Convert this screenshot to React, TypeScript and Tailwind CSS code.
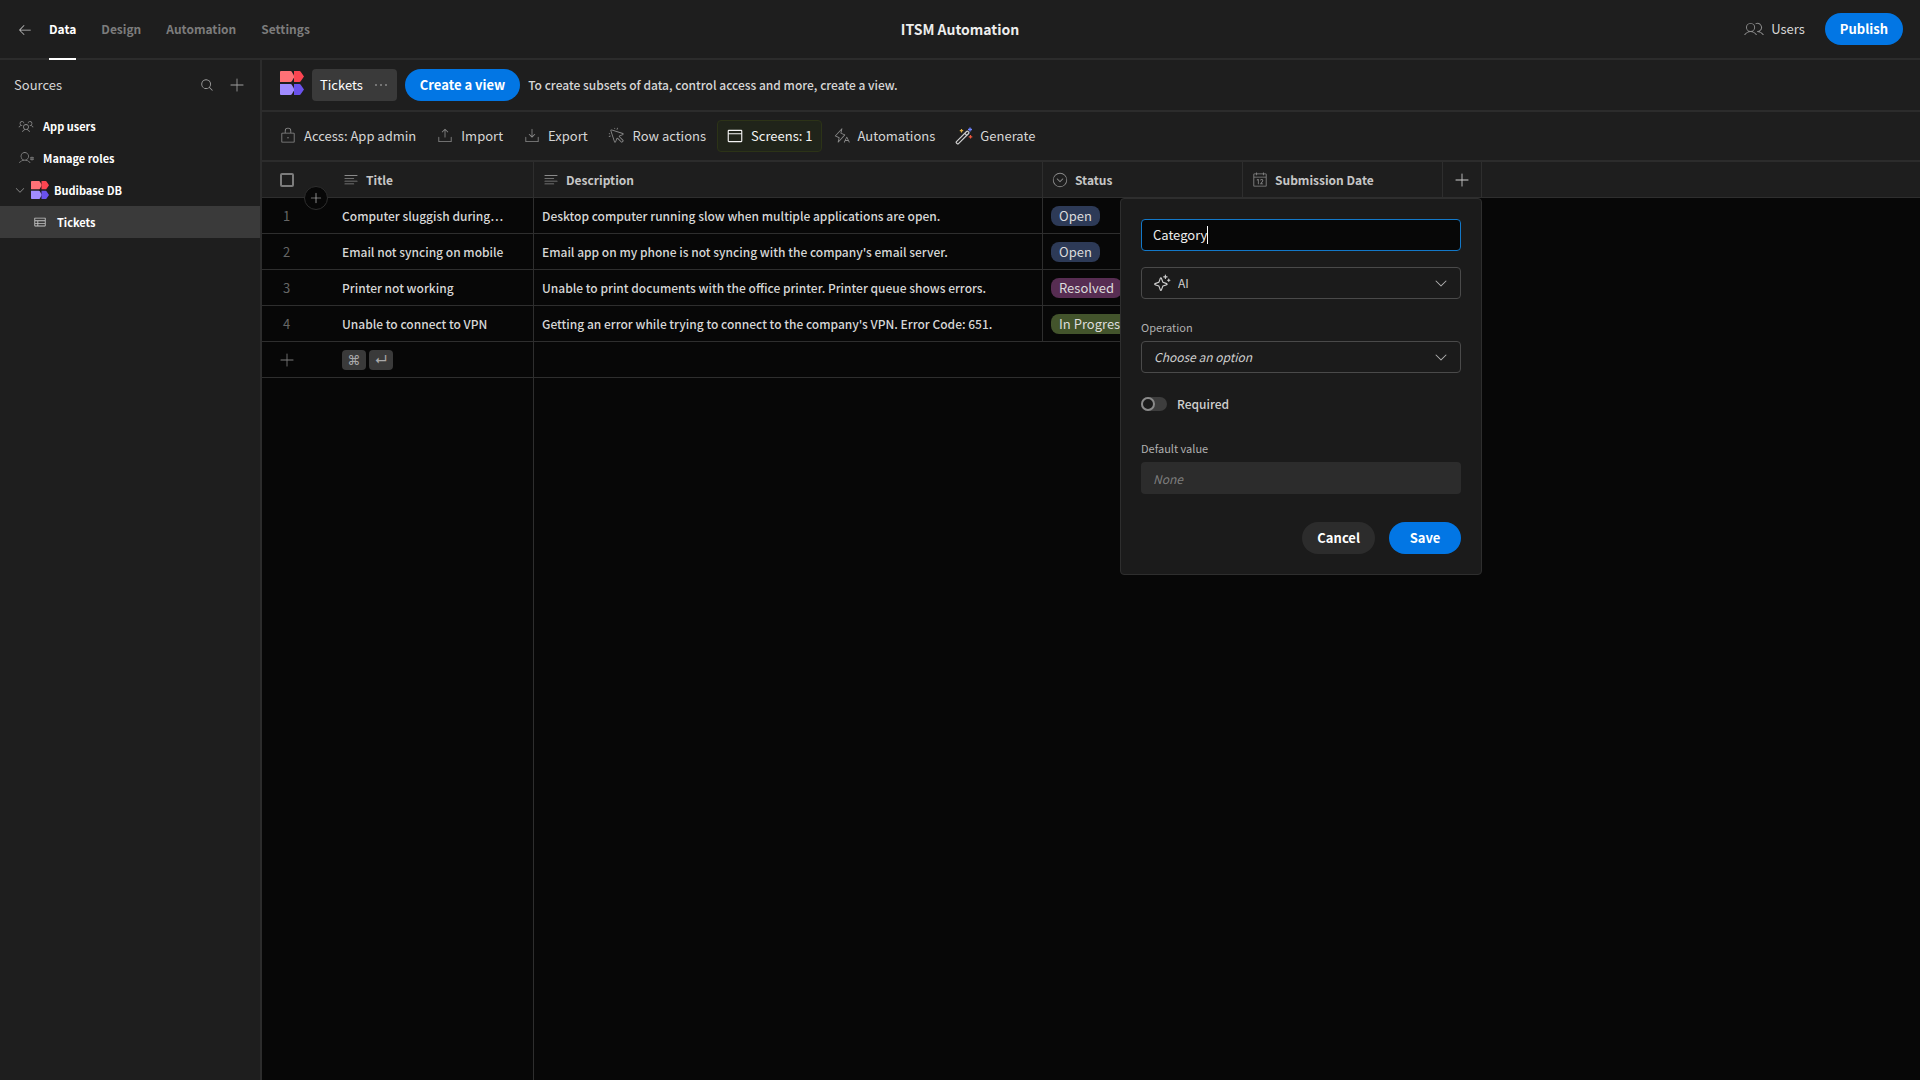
import { FC, ReactNode } from "react";
import { IconType } from "react-icons";
import {
  PiArrowLeftLight,
  PiBrowser,
  PiCalendarLight,
  PiCaretCircleDownLight,
  PiCaretDown,
  PiCursorClickLight,
  PiDownloadSimpleLight,
  PiLightningALight,
  PiLockLight,
  PiMagnifyingGlass,
  PiPlusLight,
  PiSparkle,
  PiTable,
  PiTextAlignLeftLight,
  PiUploadSimpleLight,
  PiUserGearLight,
  PiUsersLight,
  PiUsersThreeLight,
} from "react-icons/pi";

const tabs = ["Data", "Design", "Automation", "Settings"];

const actions: { label: string; icon: IconType }[] = [
  { label: "Access: App admin", icon: PiLockLight },
  { label: "Import", icon: PiUploadSimpleLight },
  { label: "Export", icon: PiDownloadSimpleLight },
  { label: "Row actions", icon: PiCursorClickLight },
];

const rows = [
  {
    title: "Computer sluggish during…",
    description: "Desktop computer running slow when multiple applications are open.",
    status: "Open",
    color: "bg-[#2d3a57]",
  },
  {
    title: "Email not syncing on mobile",
    description: "Email app on my phone is not syncing with the company's email server.",
    status: "Open",
    color: "bg-[#2d3a57]",
  },
  {
    title: "Printer not working",
    description: "Unable to print documents with the office printer. Printer queue shows errors.",
    status: "Resolved",
    color: "bg-[#572d52]",
  },
  {
    title: "Unable to connect to VPN",
    description: "Getting an error while trying to connect to the company's VPN. Error Code: 651.",
    status: "In Progress",
    color: "bg-[#43542c]",
  },
];

const Logo: FC<{ className: string }> = ({ className }) => (
  <svg viewBox="0 0 24 24" className={className} aria-hidden="true">
    <path d="M0 1a1 1 0 0 1 1-1h9.5q.8 0 1.300.7L14 4.600v1.800l-2.200 3.900q-.5.700-1.300.7H0z" fill="#ff7176" />
    <path d="M14 0h5.500q.8 0 1.200.7L24 5.500l-3.300 4.800q-.4.700-1.200.7H14z" fill="#fb4551" />
    <path d="M0 13h10.500q.8 0 1.300.7l2.200 3.900v1.800l-2.200 3.900q-.5.700-1.300.7H1a1 1 0 0 1-1-1z" fill="#a08bff" />
    <path d="M14 13h5.500q.8 0 1.200.7L24 18.500l-3.300 4.800q-.4.700-1.200.7H14z" fill="#6a52ec" />
  </svg>
);

const Wand: FC = () => (
  <svg viewBox="0 0 18 18" className="size-[18px] shrink-0" fill="none" aria-hidden="true">
    <path d="M1.500 14.600 11.600 4.500a1 1 0 0 1 1.400 0l.6.6a1 1 0 0 1 0 1.400L3.500 16.600a1 1 0 0 1-1.400 0l-.6-.6a1 1 0 0 1 0-1.400z" stroke="#d0d0d0" strokeWidth="1.200" />
    <path d="m9.800 6.300 2 2" stroke="#d0d0d0" strokeWidth="1.200" />
    <path d="M6.500 2v3.400M4.800 3.700h3.400" stroke="#e0b040" strokeWidth="1.200" />
    <path d="M15 .5v4M13 2.500h4" stroke="#6f85ff" strokeWidth="1.300" />
    <path d="M15.500 8v3.600M13.700 9.800h3.600" stroke="#f0553a" strokeWidth="1.200" />
  </svg>
);

const HeaderLabel: FC<{ icon: IconType; children: ReactNode }> = ({ icon: Icon, children }) => (
  <span className="flex items-center gap-[6px] font-bold text-[#c6c6c6]">
    <Icon className="size-[18px] shrink-0 text-[#8a8a8a]" />
    {children}
  </span>
);

const ColumnPopover: FC = () => (
  <form
    className="absolute -right-px top-full z-10 mt-px w-[362px] rounded border border-[#2e2e2e] bg-[#1b1b1b] p-5 text-left font-normal text-[#cfcfcf]"
    onSubmit={(e) => e.preventDefault()}
  >
    <div className="flex h-8 items-center rounded border border-[#1378c8] bg-[#070707] px-[11px] text-[13px]">
      <input aria-label="Column name" defaultValue="Category" className="field-sizing-content text-[#ededed] outline-none" />
      <span className="h-[18px] w-px bg-white" />
    </div>
    <div className="relative mt-4">
      <PiSparkle className="pointer-events-none absolute left-3 top-[7px] size-[18px]" />
      <select aria-label="Type" className="h-8 w-full appearance-none rounded border border-[#4a4a4a] pl-9 outline-none">
        <option>AI</option>
      </select>
      <PiCaretDown className="pointer-events-none absolute right-3 top-2 size-4 text-[#b0b0b0]" />
    </div>
    <label htmlFor="operation" className="mt-5 block text-[11px] leading-4 text-[#b0b0b0]">
      Operation
    </label>
    <div className="relative mt-[6px]">
      <select id="operation" className="h-8 w-full appearance-none rounded border border-[#4a4a4a] pl-3 italic outline-none">
        <option>Choose an option</option>
      </select>
      <PiCaretDown className="pointer-events-none absolute right-3 top-2 size-4 text-[#b0b0b0]" />
    </div>
    <label className="mt-[21px] flex items-center gap-[10px] font-medium">
      <input
        type="checkbox"
        role="switch"
        className="h-[14px] w-[26px] appearance-none rounded-full bg-[#3d3d3d] before:block before:size-[14px] before:rounded-full before:border-2 before:border-[#8a8a8a] before:bg-[#1b1b1b]"
      />
      Required
    </label>
    <label htmlFor="default-value" className="mt-[26px] block text-[11px] leading-4 text-[#b0b0b0]">
      Default value
    </label>
    <input
      id="default-value"
      placeholder="None"
      disabled
      className="mt-[6px] block h-8 w-full rounded bg-[#2c2c2c] px-3 italic placeholder:text-[#7e7e7e]"
    />
    <div className="mt-7 flex justify-end gap-[14px] text-[13px] font-bold text-white">
      <button type="button" className="h-8 rounded-full bg-[#2c2c2c] px-[15px]">
        Cancel
      </button>
      <button type="submit" className="h-8 w-[72px] rounded-full bg-[#0276e4]">
        Save
      </button>
    </div>
  </form>
);

const Sidebar: FC = () => (
  <aside className="w-[262px] shrink-0 border-r-2 border-[#2c2c2c] text-[11px] font-bold text-white">
    <div className="flex h-[50px] items-center gap-[14px] px-[14px] text-[#a0a0a0]">
      <h2 className="flex-1 text-[13px] font-normal text-[#d6d6d6]">Sources</h2>
      <button aria-label="Search sources">
        <PiMagnifyingGlass className="size-[14px]" />
      </button>
      <button aria-label="Add source">
        <PiPlusLight className="size-[18px]" />
      </button>
    </div>
    <nav className="flex flex-col">
      <a href="#" className="flex h-8 items-center gap-[9px] pl-[18px]">
        <PiUsersThreeLight className="size-4 text-[#8a8a8a]" />
        App users
      </a>
      <a href="#" className="flex h-8 items-center gap-[9px] pl-[18px]">
        <PiUserGearLight className="size-4 text-[#8a8a8a]" />
        Manage roles
      </a>
      <a href="#" className="flex h-8 items-center gap-[5px] pl-[14px]">
        <PiCaretDown className="size-3 text-[#8a8a8a]" />
        <Logo className="size-[18px]" />
        Budibase DB
      </a>
      <a href="#" className="flex h-8 items-center gap-[10px] bg-[#3a3a3a] pl-[33px]">
        <PiTable className="size-[14px] text-[#c6c6c6]" />
        Tickets
      </a>
    </nav>
  </aside>
);

const DataTable: FC = () => (
  <table className="w-full table-fixed border-separate border-spacing-0 text-left text-xs leading-5 font-medium">
    <colgroup>
      <col className="w-[72px]" />
      <col className="w-[200px]" />
      <col className="w-[509px]" />
      <col className="w-[200px]" />
      <col className="w-[200px]" />
      <col className="w-[39px]" />
      <col />
    </colgroup>
    <thead>
      <tr className="h-9 bg-[#1e1e1e] *:border-b *:border-[#2e2e2e]">
        <th className="relative pl-[18px]">
          <input type="checkbox" aria-label="Select all rows" className="block size-[14px] appearance-none rounded-xs border-2 border-[#7c7c7c]" />
          <button
            aria-label="Insert row"
            className="absolute -bottom-[13px] right-[6px] flex size-6 items-center justify-center rounded-full border border-[#2e2e2e] bg-[#070707] text-[#cfcfcf]"
          >
            <PiPlusLight className="size-[14px]" />
          </button>
        </th>
        <th className="border-r pl-2">
          <HeaderLabel icon={PiTextAlignLeftLight}>Title</HeaderLabel>
        </th>
        <th className="border-r pl-2">
          <HeaderLabel icon={PiTextAlignLeftLight}>Description</HeaderLabel>
        </th>
        <th className="border-r pl-2">
          <HeaderLabel icon={PiCaretCircleDownLight}>Status</HeaderLabel>
        </th>
        <th className="border-r pl-2">
          <HeaderLabel icon={PiCalendarLight}>Submission Date</HeaderLabel>
        </th>
        <th className="relative border-r">
          <button aria-label="Add column" className="mx-auto block text-[#cfcfcf]">
            <PiPlusLight className="size-[18px]" />
          </button>
          <ColumnPopover />
        </th>
        <th />
      </tr>
    </thead>
    <tbody>
      {rows.map((row, index) => (
        <tr key={index} className="h-9 *:border-b *:border-[#2e2e2e]">
          <td className="pl-[21px] text-[13px] font-normal text-[#666666]">{index + 1}</td>
          <td className="truncate border-r pl-2">{row.title}</td>
          <td className="truncate border-r pl-2">{row.description}</td>
          <td className="border-r pl-2">
            <span className={`inline-block h-5 rounded-lg px-2 align-middle text-[13px] leading-5 font-normal text-[#dcdcdc] ${row.color}`}>
              {row.status}
            </span>
          </td>
          <td className="border-r" />
          <td />
        </tr>
      ))}
      <tr className="h-9 *:border-b *:border-[#2e2e2e]">
        <td className="pl-4">
          <button aria-label="Add row" className="block text-[#7c7c7c]">
            <PiPlusLight className="size-[18px]" />
          </button>
        </td>
        <td className="border-r pl-2">
          <span className="flex gap-[3px] text-[13px] text-[#a8a8a8]">
            <kbd className="flex h-5 w-6 items-center justify-center rounded bg-[#3a3a3a] font-[Inter,sans-serif]">⌘</kbd>
            <kbd className="flex h-5 w-6 items-center justify-center rounded bg-[#3a3a3a] font-[Inter,sans-serif]">↵</kbd>
          </span>
        </td>
        <td />
        <td />
        <td />
        <td />
      </tr>
    </tbody>
  </table>
);

const App: FC = () => {
  return (
    <div className="flex min-h-screen flex-col bg-[#1e1e1e] font-['Noto_Sans_CJK_SC',sans-serif] text-[13px] leading-5 text-[#d6d6d6]">
      <header className="grid h-[60px] grid-cols-[1fr_auto_1fr] items-center border-b-2 border-[#2c2c2c] px-[17px]">
        <div className="-mb-[2px] flex items-center gap-4">
          <a href="#" aria-label="Back" className="text-[#c6c6c6]">
            <PiArrowLeftLight className="size-4" />
          </a>
          <nav className="flex gap-[25px] text-xs font-bold">
            {tabs.map((tab) => (
              <a
                key={tab}
                href="#"
                className={`flex h-[60px] items-center border-b-2 ${
                  tab === "Data" ? "border-white text-white" : "border-transparent text-[#7c7c7c]"
                }`}
              >
                {tab}
              </a>
            ))}
          </nav>
        </div>
        <h1 className="text-sm font-bold text-[#ededed]">ITSM Automation</h1>
        <div className="flex items-center justify-end gap-5">
          <a href="#" className="flex items-center gap-[7px]">
            <PiUsersLight className="size-5 text-[#8a8a8a]" />
            Users
          </a>
          <button className="h-8 rounded-full bg-[#0276e4] px-[15px] font-bold text-white">Publish</button>
        </div>
      </header>
      <div className="flex flex-1">
        <Sidebar />
        <main className="flex min-w-0 flex-1 flex-col">
          <div className="flex h-[52px] items-center gap-2 border-b-2 border-[#2c2c2c] px-[18px]">
            <Logo className="mb-1 size-6" />
            <div className="flex h-8 items-center gap-[10px] rounded bg-[#3a3a3a] px-2 text-white">
              Tickets
              <button aria-label="More options" className="text-[#8a8a8a]">
                <svg viewBox="0 0 16 4" className="h-1 w-4" fill="currentColor" aria-hidden="true">
                  <circle cx="3" cy="2" r="1" />
                  <circle cx="8" cy="2" r="1" />
                  <circle cx="13" cy="2" r="1" />
                </svg>
              </button>
            </div>
            <button className="h-8 rounded-full bg-[#0276e4] px-[15px] font-bold text-white">Create a view</button>
            <p className="text-xs font-medium">To create subsets of data, control access and more, create a view.</p>
          </div>
          <div className="flex h-[50px] items-center gap-[2px] border-b-2 border-[#2c2c2c] px-2">
            {actions.map(({ label, icon: Icon }) => (
              <button key={label} className="flex h-8 items-center gap-[7px] px-[9px]">
                <Icon className="size-[18px] text-[#8a8a8a]" />
                {label}
              </button>
            ))}
            <button className="flex h-8 items-center gap-[7px] rounded border border-[#2c3317] bg-[#20241a] px-2 text-[#f4f4f4]">
              <PiBrowser className="size-[18px]" />
              Screens: 1
            </button>
            <button className="flex h-8 items-center gap-[7px] px-[9px]">
              <PiLightningALight className="size-[18px] text-[#8a8a8a]" />
              Automations
            </button>
            <button className="flex h-8 items-center gap-[7px] px-[9px]">
              <Wand />
              Generate
            </button>
          </div>
          <div className="flex flex-1 flex-col bg-[#070707]">
            <DataTable />
            <div className="w-[272px] flex-1 border-r border-[#2e2e2e]" />
          </div>
        </main>
      </div>
    </div>
  );
};

export default App;
